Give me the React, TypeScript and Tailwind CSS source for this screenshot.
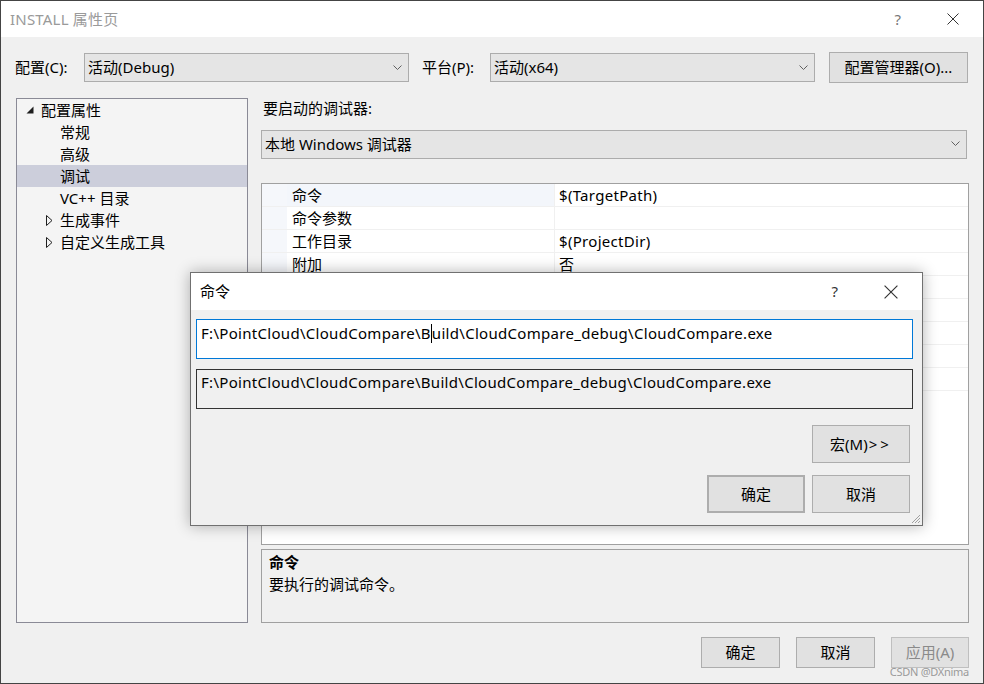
import React from "react";

const font = { fontFamily: '"Noto Sans", "Noto Sans CJK SC", sans-serif' };

function Chevron() {
  return (
    <svg width="9" height="6" viewBox="0 0 9 6" className="shrink-0">
      <path d="M0.5 0.5 L4.5 4.5 L8.5 0.5" fill="none" stroke="#606060" strokeWidth="1" />
    </svg>
  );
}

function Combo({ text, className }: { text: string; className: string }) {
  return (
    <div className={`flex items-center justify-between border border-[#acacac] bg-[#e5e5e5] pl-[3px] pr-[6px] ${className}`}>
      <span>{text}</span>
      <Chevron />
    </div>
  );
}

function Btn({ children, className = "" }: { children: React.ReactNode; className?: string }) {
  return (
    <div className={`flex items-center justify-center border border-[#adadad] bg-[#e1e1e1] ${className}`}>
      {children}
    </div>
  );
}

function CloseX({ size = 12 }: { size?: number }) {
  return (
    <svg width={size} height={size} viewBox="0 0 12 12">
      <path d="M0.5 0.5 L11.5 11.5 M11.5 0.5 L0.5 11.5" stroke="#333" strokeWidth="1" fill="none" />
    </svg>
  );
}

const treeItems = [
  { label: "配置属性", indent: "pl-[24px]", arrow: "open" },
  { label: "常规", indent: "pl-[43px]" },
  { label: "高级", indent: "pl-[43px]" },
  { label: "调试", indent: "pl-[43px]", selected: true },
  { label: "VC++ 目录", indent: "pl-[43px]" },
  { label: "生成事件", indent: "pl-[43px]", arrow: "closed" },
  { label: "自定义生成工具", indent: "pl-[43px]", arrow: "closed" },
];

const rows = [
  { k: "命令", v: "$(TargetPath)", sel: true },
  { k: "命令参数", v: "" },
  { k: "工作目录", v: "$(ProjectDir)" },
  { k: "附加", v: "否" },
  { k: "", v: "" },
  { k: "", v: "" },
  { k: "", v: "" },
  { k: "", v: "" },
  { k: "", v: "" },
];

const path = "F:\\PointCloud\\CloudCompare\\Build\\CloudCompare_debug\\CloudCompare.exe";

export default function App() {
  return (
    <div style={font} className="relative w-[984px] h-[684px] border border-[#444] bg-[#f0f0f0] text-[15px] text-black flex flex-col overflow-hidden">
      {/* title bar */}
      <div className="h-[36px] bg-white flex items-center justify-between pl-[9px] pr-[24px] shrink-0">
        <span className="text-[15px] text-[#9a9a9a] tracking-[0.2px]">INSTALL 属性页</span>
        <div className="flex items-center gap-[46px]">
          <span className="text-[15px] text-[#777]">?</span>
          <CloseX />
        </div>
      </div>

      {/* config row */}
      <div className="flex items-center h-[31px] mt-[15px] pl-[14px]">
        <span className="w-[69px]">配置(C):</span>
        <Combo text="活动(Debug)" className="w-[325px] h-[29px]" />
        <span className="ml-[13px] w-[68px]">平台(P):</span>
        <Combo text="活动(x64)" className="w-[325px] h-[29px]" />
        <Btn className="ml-[14px] w-[139px] h-[31px]">配置管理器(O)...</Btn>
      </div>

      {/* main area */}
      <div className="flex mt-[15px] pl-[15px] gap-[13px] h-[525px]">
        <div className="w-[232px] border border-[#8a8a96] bg-[#f4f4f4]">
          {treeItems.map((t) => (
            <div
              key={t.label}
              className={`relative h-[22px] flex items-center ${t.indent} ${t.selected ? "bg-[#cccedb]" : ""}`}
            >
              {t.arrow === "open" && (
                <svg width="8" height="8" viewBox="0 0 8 8" className="absolute left-[9px] top-[7px]">
                  <path d="M7.5 0.5 L7.5 7.5 L0.5 7.5 Z" fill="#1e1e1e" />
                </svg>
              )}
              {t.arrow === "closed" && (
                <svg width="7" height="11" viewBox="0 0 7 11" className="absolute left-[29px] top-[6px]">
                  <path d="M0.5 0.5 L6 5.5 L0.5 10.5 Z" fill="none" stroke="#1e1e1e" strokeWidth="1" />
                </svg>
              )}
              <span>{t.label}</span>
            </div>
          ))}
        </div>

        <div className="w-[708px] flex flex-col">
          <div className="h-[20px] flex items-center pl-[2px]">要启动的调试器:</div>
          <Combo text="本地 Windows 调试器" className="mt-[12px] w-[706px] h-[29px]" />
          <div className="mt-[24px] w-[708px] h-[363px] border border-[#a0a0a0] bg-white">
            {rows.map((r, i) => (
              <div key={i} className="flex h-[23px] border-b border-[#f0f0f0]">
                <div className="w-[25px] bg-[#f5f7fb]" />
                <div className={`w-[267px] flex items-center pl-[5px] ${r.sel ? "bg-[#f3f6fb]" : ""}`}>{r.k}</div>
                <div className="flex-1 flex items-center pl-[4px] border-l border-[#f0f0f0] tracking-[0.3px]">{r.v}</div>
              </div>
            ))}
          </div>
          <div className="mt-[4px] w-[708px] h-[74px] border border-[#a0a0a0] bg-[#f0f0f0] px-[7px] pt-[1px]">
            <div className="font-bold leading-[22px]">命令</div>
            <div className="leading-[22px]">要执行的调试命令。</div>
          </div>
        </div>
      </div>

      {/* bottom buttons */}
      <div className="flex justify-end gap-[16px] pr-[14px] mt-[14px]">
        <Btn className="w-[79px] h-[31px]">确定</Btn>
        <Btn className="w-[79px] h-[31px]">取消</Btn>
        <Btn className="w-[78px] h-[31px] border-[#bfbfbf] bg-[#cccccc] text-[#8a8a8a]">应用(A)</Btn>
      </div>
      <div className="absolute right-[14px] bottom-[6px] text-[11px] text-[#9a9a9a] leading-none tracking-tight">CSDN @DXnima</div>

      {/* command dialog */}
      <div className="absolute left-[189px] top-[271px] w-[733px] h-[254px] border border-[#707070] bg-[#f0f0f0] shadow-[0_0_14px_rgba(0,0,0,0.3)] flex flex-col">
        <div className="h-[37px] bg-white flex items-center justify-between pl-[9px] pr-[24px] shrink-0">
          <span>命令</span>
          <div className="flex items-center gap-[46px]">
            <span className="text-[15px] text-[#333]">?</span>
            <CloseX size={14} />
          </div>
        </div>
        <div className="pl-[5px] pr-[9px] pt-[9px] flex flex-col tracking-[0.3px]">
          <div className="h-[40px] border border-[#0078d7] bg-white pl-[4px] pt-[2px] flex items-start">
            <span>{path.slice(0, 28)}</span>
            <span className="inline-block w-px h-[19px] bg-black mt-[2px]" />
            <span>{path.slice(28)}</span>
          </div>
          <div className="mt-[10px] h-[40px] border border-[#333] bg-[#f0f0f0] pl-[4px] pt-[1px]">{path}</div>
          <div className="flex justify-end pr-[3px] mt-[16px] tracking-normal">
            <Btn className="w-[98px] h-[38px]">
              宏(M)<span className="tracking-[3px] ml-[1px]">&gt;&gt;</span>
            </Btn>
          </div>
          <div className="flex justify-end gap-[7px] pr-[3px] mt-[12px] tracking-normal">
            <Btn className="w-[98px] h-[38px] border-2 border-[#0078d7]">确定</Btn>
            <Btn className="w-[98px] h-[38px]">取消</Btn>
          </div>
        </div>
        <svg width="11" height="11" viewBox="0 0 11 11" className="absolute right-[1px] bottom-[1px]">
          <path d="M10 2 L2 10 M10 5 L5 10 M10 8 L8 10" stroke="#a0a0a0" strokeWidth="1" />
        </svg>
      </div>
    </div>
  );
}
